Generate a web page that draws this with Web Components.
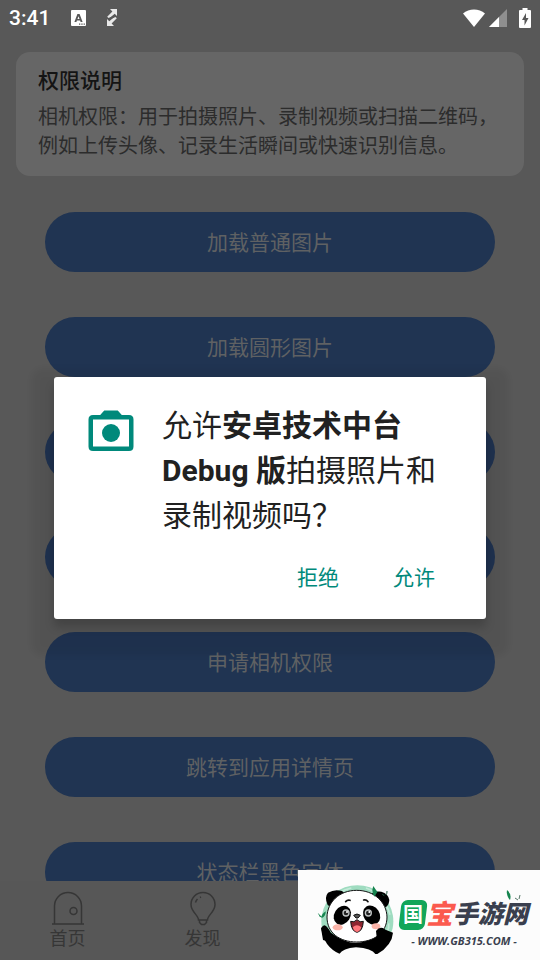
<!DOCTYPE html>
<html lang="zh-CN">
<head>
<meta charset="utf-8">
<meta name="viewport" content="width=device-width, initial-scale=1">
<title>权限说明</title>
<style>
    html, body {
        height: 100%;
        margin: 0;
    }

    body {
        background-color: #585858;
        font-family: Roboto, "Noto Sans CJK SC", sans-serif;
    }
</style>
</head>
<body>
<app-screen>
    <status-bar time="3:41"></status-bar>
    <permission-note heading="权限说明">相机权限：用于拍摄照片、录制视频或扫描二维码，例如上传头像、记录生活瞬间或快速识别信息。</permission-note>
    <pill-button>加载普通图片</pill-button>
    <pill-button>加载圆形图片</pill-button>
    <pill-button></pill-button>
    <pill-button></pill-button>
    <pill-button>申请相机权限</pill-button>
    <pill-button>跳转到应用详情页</pill-button>
    <pill-button>状态栏黑色字体</pill-button>
    <tab-bar slot="tabs"></tab-bar>
    <permission-dialog slot="overlay">允许<b>安卓技术中台 Debug 版</b>拍摄照片和录制视频吗？</permission-dialog>
    <site-badge slot="overlay"></site-badge>
</app-screen>

<script>
class AppScreen extends HTMLElement {

    constructor() {
        super();
        this.attachShadow({ mode: 'open' }).innerHTML = `
            <style>
                :host {
                    display: flex;
                    flex-direction: column;
                    height: 100vh;
                    overflow: hidden;
                    position: relative;
                }

                .content {
                    display: flex;
                    flex: 1;
                    flex-direction: column;
                    min-height: 0;
                    overflow: hidden;
                }
            </style>
            <main class="content"><slot></slot></main>
            <slot name="tabs"></slot>
            <slot name="overlay"></slot>
        `;
    }

}

class StatusBar extends HTMLElement {

    constructor() {
        super();
        this.attachShadow({ mode: 'open' }).innerHTML = `
            <style>
                :host {
                    align-items: center;
                    box-sizing: border-box;
                    color: #fff;
                    display: flex;
                    flex: none;
                    height: 52px;
                    padding: 0 9px 16px;
                }

                time {
                    flex: 1;
                    font-size: 21px;
                    font-weight: 500;
                    line-height: 24px;
                    display: flex;
                    align-items: center;
                    gap: 20px;
                }

                svg {
                    display: block;
                    fill: currentColor;
                }

                .signal {
                    margin: 0 12px 0 4px;
                }
            </style>
            <time>${this.getAttribute('time')}
                <svg width="16" height="17" viewBox="0 0 16 17">
                    <rect x="1" width="15" height="16" rx="1"/>
                    <path fill="#585858" fill-rule="evenodd" d="M7.400 4h2.200l3 8h-2l-.5-1.500H6.900L6.400 12h-2zM8.500 6.200L7.500 9h2z"/>
                    <path fill="#585858" d="M9 13.500h1.300v1.300H9zM11.300 13.500h1.300v1.300h-1.300zM13.600 13.500h1.300v1.300h-1.300z"/>
                </svg>
                <svg width="12" height="18" viewBox="0 0 12 18">
                    <g fill="#e8e8e8">
                        <path d="M4 0h7v7L8.700 4.700 3 9.500 1.200 7.700 6.400 2.400z"/>
                        <path d="M8 17H1v-7l2.300 2.300L9 7.500l1.800 1.800-5.200 5.300z"/>
                    </g>
                    <path stroke="#585858" stroke-width="1.500" d="M2 10l8-3"/>
                </svg>
            </time>
            <svg width="22" height="18" viewBox="0 0 22 18"><path d="M0 4.500C6-1 16-1 22 4.500L11 18z"/></svg>
            <svg class="signal" width="18" height="18" viewBox="0 0 18 18">
                <path fill="#8f8f8f" d="M18 0v18H0z"/><path d="M10 8v10H0z"/>
            </svg>
            <svg width="12" height="20" viewBox="0 0 12 20">
                <path d="M3.500 0h5v2H11q1 0 1 1v16q0 1-1 1H1q-1 0-1-1V3q0-1 1-1h2.500z"/>
                <path fill="#585858" d="M7 5L3 12h2.500v5.500L9.500 10H7z"/>
            </svg>
        `;
    }

}

class PermissionNote extends HTMLElement {

    constructor() {
        super();
        this.attachShadow({ mode: 'open' }).innerHTML = `
            <style>
                :host {
                    background-color: #666;
                    border-radius: 14px;
                    color: #2c2c2c;
                    display: block;
                    flex: none;
                    margin: 0 16px 36px;
                    padding: 16px 22px 15px;
                }

                h1 {
                    color: #141414;
                    font-size: 21px;
                    font-weight: 500;
                    line-height: 26px;
                    margin: 0 0 9px;
                }

                p {
                    font-size: 20px;
                    line-height: 29px;
                    margin: 0;
                }
            </style>
            <h1>${this.getAttribute('heading')}</h1>
            <p><slot></slot></p>
        `;
    }

}

class PillButton extends HTMLElement {

    constructor() {
        super();
        this.attachShadow({ mode: 'open' }).innerHTML = `
            <style>
                :host {
                    display: block;
                    flex: none;
                    margin: 0 45px 45px;
                }

                button {
                    background-color: #203452;
                    border: none;
                    border-radius: 30px;
                    color: #5f6163;
                    display: block;
                    font: inherit;
                    font-size: 21px;
                    height: 60px;
                    padding: 0 0 3px;
                    width: 100%;
                }
            </style>
            <button type="button"><slot></slot></button>
        `;
    }

}

class TabBar extends HTMLElement {

    constructor() {
        super();
        this.attachShadow({ mode: 'open' }).innerHTML = `
            <style>
                :host {
                    background-color: #575757;
                    color: #363636;
                    display: block;
                    flex: none;
                }

                nav {
                    display: grid;
                    grid-template-columns: repeat(4, 1fr);
                    padding: 10px 0 9px;
                }

                a {
                    align-items: center;
                    color: inherit;
                    display: flex;
                    flex-direction: column;
                    font-size: 18px;
                    line-height: 24px;
                    text-decoration: none;
                }

                svg {
                    fill: none;
                    stroke: currentColor;
                    stroke-width: 1.5;
                }
            </style>
            <nav>
                <a href="#home">
                    <svg width="36" height="36" viewBox="0 0 36 36">
                        <path d="M2 33h32M4.500 33V15a13.500 13.500 0 0 1 27 0v18"/>
                        <circle cx="23.500" cy="20" r="3.500"/>
                    </svg>
                    首页
                </a>
                <a href="#discover">
                    <svg width="36" height="36" viewBox="0 0 36 36">
                        <path d="M13.500 29c0-5-7.500-8-7.500-15.500a12 12 0 0 1 24 0C30 21 22.500 24 22.500 29zM14.500 29v2.500l2 2h3l2-2V29M10.500 11.500q.5-2 2-3.500M15 6.500l1-.5"/>
                    </svg>
                    发现
                </a>
            </nav>
        `;
    }

}

class PermissionDialog extends HTMLElement {

    constructor() {
        super();
        this.attachShadow({ mode: 'open' }).innerHTML = `
            <style>
                :host {
                    align-items: center;
                    box-sizing: border-box;
                    display: flex;
                    inset: 0;
                    justify-content: center;
                    padding-top: 36px;
                    position: absolute;
                }

                .dialog {
                    background-color: #fff;
                    border-radius: 3px;
                    box-shadow: 0 8px 10px rgba(0, 0, 0, .18), 0 14px 6px 22px rgba(0, 0, 0, .06);
                    box-sizing: border-box;
                    padding: 26px 36px 20px 30px;
                    width: 80%;
                }

                .message {
                    display: flex;
                    gap: 24px;
                }

                svg {
                    fill: #00897b;
                    flex: none;
                    margin-top: 3px;
                }

                p {
                    color: #212121;
                    font-size: 30px;
                    line-height: 45px;
                    margin: 0;
                }

                .actions {
                    display: flex;
                    gap: 24px;
                    justify-content: flex-end;
                    margin-top: 20px;
                }

                button {
                    background: none;
                    border: none;
                    color: #00897b;
                    font: inherit;
                    font-size: 21px;
                    line-height: 41px;
                    padding: 0 15px;
                }
            </style>
            <div class="dialog" role="dialog" aria-labelledby="message">
                <div class="message">
                    <svg width="54" height="54" viewBox="0 0 24 24">
                        <path fill-rule="evenodd" d="M9 2h6l1.800 2H20q2 0 2 2v12q0 2-2 2H4q-2 0-2-2V6q0-2 2-2h3.200zM4 6v12h16V6z"/>
                        <circle cx="12" cy="12" r="4"/>
                    </svg>
                    <p id="message"><slot></slot></p>
                </div>
                <div class="actions">
                    <button type="button">拒绝</button>
                    <button type="button">允许</button>
                </div>
            </div>
        `;
    }

}

class SiteBadge extends HTMLElement {

    constructor() {
        super();
        this.attachShadow({ mode: 'open' }).innerHTML = `
            <style>
                :host {
                    background-color: #fcfcfc;
                    bottom: 0;
                    color: #3a3f4e;
                    display: flex;
                    position: absolute;
                    right: 0;
                }

                .words {
                    font-style: italic;
                    font-weight: 700;
                    padding: 26px 12px 0 4px;
                    position: relative;
                    text-align: center;
                }

                .name {
                    align-items: center;
                    display: flex;
                    font-size: 25px;
                    font-weight: 900;
                    line-height: 38px;
                }

                .green {
                    color: #fff;
                    font-size: 20px;
                    font-style: normal;
                    font-weight: 700;
                    isolation: isolate;
                    line-height: 30px;
                    padding: 0 3px;
                    position: relative;
                }

                /* slanted tile behind the first character */
                .green::before {
                    background-color: #12a65a;
                    border-radius: 6px;
                    content: "";
                    inset: 0;
                    position: absolute;
                    transform: skewX(-7deg);
                    z-index: -1;
                }

                .red {
                    color: #fb5a4e;
                    font-size: 27px;
                }

                .url {
                    font-family: "Open Sans", sans-serif;
                    font-size: 11px;
                    line-height: 14px;
                }

                .leaf {
                    position: absolute;
                    right: 18px;
                    top: 20px;
                }
            </style>
            <svg width="98" height="90" viewBox="6 15 294 270">
                <path fill="#9fdcc0" d="M92 225a108 108 0 1 1 184 0z"/>
                <path fill="none" stroke="#c5ebda" stroke-width="5" d="M94 115q30-38 72-46M210 69q55 20 72 80M278 175q2 12-4 25"/>
                <path d="M76 188q9-15 19 0l10 15q78 60 140 0l3-10q8-12 17 0l26 10q-3 38-47 64H132q-50-22-56-79z"/>
                <path fill="#fcfcfc" d="M130 267q10-17 50-20 48 3 58 20z"/>
                <path d="M95 120Q84 97 96 83q20-12 42-5l14 12-43 40zM222 92q10-15 34-12 21 6 24 25-1 16-11 22z"/>
                <path fill="#fff" stroke="#111" stroke-width="3" d="M182 76c52 0 90 35 91 80 0 48-40 75-91 75s-89-27-89-75c1-45 37-80 89-80z"/>
                <path fill="none" stroke="#111" stroke-width="5" stroke-linecap="round" d="M149 110q6-7 13-4M203 105q8-2 13 5"/>
                <ellipse cx="139" cy="151" rx="24" ry="30" transform="rotate(32 139 151)"/>
                <ellipse cx="227" cy="150" rx="24" ry="30" transform="rotate(-32 227 150)"/>
                <g fill="#222" stroke="#bfc3c3" stroke-width="4"><circle cx="150" cy="144" r="9"/><circle cx="217" cy="144" r="9"/></g>
                <circle cx="153" cy="141" r="3" fill="#fff"/><circle cx="220" cy="141" r="3" fill="#fff"/>
                <path fill="#555" stroke="#111" stroke-width="3" d="M173 151q10-8 20 0l-7 8h-6z"/>
                <path fill="#8f2530" stroke="#111" stroke-width="3" d="M164 169q10 5 19-5 9 10 19 5-2 30-19 33-17-3-19-33z"/>
                <path fill="#ff777c" d="M170 187q13-12 26 0-4 12-13 14-9-2-13-14z"/>
                <ellipse cx="125" cy="187" rx="15" ry="9" fill="#fbb4a9"/>
                <ellipse cx="240" cy="184" rx="13" ry="9" fill="#fbb4a9"/>
                <path d="M75 190q12-12 24 5l10 38-28-8zM240 198q12-16 26-5l10 28-32 14z"/>
                <path fill="#16844f" d="M235 95q-10-15-3-32l12 18zM76 160q0-13 13-21 2 14-13 21zM65 143l12 12-5 2z"/>
                <path fill="none" stroke="#285c46" stroke-width="3" d="M259 88l6 4M269 90q5-4 4-12"/>
            </svg>
            <div class="words">
                <svg class="leaf" width="16" height="12" viewBox="0 0 16 12">
                    <path fill="#16844f" d="M1 0q5 4 3 10Q0 6 1 0z"/>
                    <path fill="none" stroke="#557768" d="M9 8l3 2M13 9l1-4"/>
                </svg>
                <div class="name"><span class="green">国</span><span class="red">宝</span>手游网</div>
                <div class="url">- WWW.GB315.COM -</div>
            </div>
        `;
    }

}

customElements.define('app-screen', AppScreen);
customElements.define('status-bar', StatusBar);
customElements.define('permission-note', PermissionNote);
customElements.define('pill-button', PillButton);
customElements.define('tab-bar', TabBar);
customElements.define('permission-dialog', PermissionDialog);
customElements.define('site-badge', SiteBadge);
</script>
</body>
</html>
